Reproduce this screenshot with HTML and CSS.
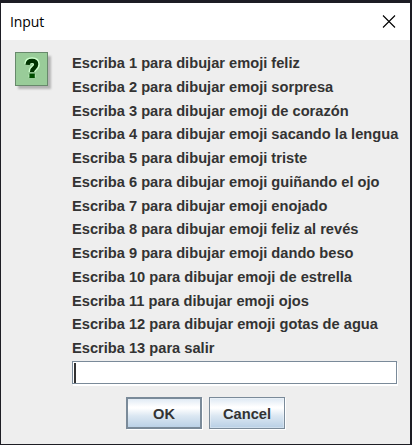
FILE: index.html
```html
<!DOCTYPE html>
<html lang="es">
<head>
<meta charset="utf-8">
<title>Input</title>
<link rel="stylesheet" href="styles.css">
</head>
<body>
<main class="dialog">
  <header class="titlebar">
    <h1 class="title">Input</h1>
    <svg class="close" width="14" height="14" viewBox="0 0 14 14"><path d="M1 .5L13 12.5M13 .5L1 12.5" stroke="#000" stroke-width="1.1" fill="none"/></svg>
  </header>
  <div class="content">
    <svg class="question" width="40" height="40" viewBox="0 0 40 40">
      <defs><filter id="soft" x="-20%" y="-20%" width="140%" height="140%"><feGaussianBlur stdDeviation="1.2"/></filter></defs>
      <rect x="3" y="4" width="33" height="33" fill="#b4b4b4" filter="url(#soft)"/>
      <rect x=".5" y=".5" width="32" height="33" fill="#99cc99" stroke="#67896b"/>
      <path d="M12.8 12.2V11.5Q13 8.6 17 8.6Q21.4 8.6 21.4 12.3Q21.4 14.6 19 16.2Q17 17.6 17 20M17 22.5V25.2" fill="none" stroke="#ccffcc" stroke-width="6.8" stroke-linejoin="round"/>
      <path d="M12.6 12.8Q12.8 8.9 17 8.9Q21.2 8.9 21.2 12.3Q21.2 14.6 19 16.2Q17 17.6 17 20" fill="none" stroke="#003300" stroke-width="4.2"/>
      <rect x="14.4" y="21.4" width="5.4" height="4.6" fill="#004d00"/>
      <path d="M14 20.8H20" stroke="#8dbd8d" stroke-width="1.2"/>
    </svg>
    <div class="form">
      <div class="message">
        <p>Escriba 1 para dibujar emoji feliz</p>
        <p>Escriba 2 para dibujar emoji sorpresa</p>
        <p>Escriba 3 para dibujar emoji de corazón</p>
        <p>Escriba 4 para dibujar emoji sacando la lengua</p>
        <p>Escriba 5 para dibujar emoji triste</p>
        <p>Escriba 6 para dibujar emoji guiñando el ojo</p>
        <p>Escriba 7 para dibujar emoji enojado</p>
        <p>Escriba 8 para dibujar emoji feliz al revés</p>
        <p>Escriba 9 para dibujar emoji dando beso</p>
        <p>Escriba 10 para dibujar emoji de estrella</p>
        <p>Escriba 11 para dibujar emoji ojos</p>
        <p>Escriba 12 para dibujar emoji gotas de agua</p>
        <p>Escriba 13 para salir</p>
      </div>
      <div class="field"><span class="caret"></span></div>
    </div>
  </div>
  <footer class="actions">
    <button class="button focused">OK</button>
    <button class="button">Cancel</button>
  </footer>
</main>
</body>
</html>
```
FILE: styles.css
```css
* { box-sizing: border-box; }
body {
  margin: 0;
  height: 445px;
  padding: 3px 2px 1px 1px;
  background: #1d1d24;
  overflow: hidden;
  font-family: "Liberation Sans", Arial, sans-serif;
  color: #333;
}
.dialog {
  height: 441px;
  background: #eee;
  display: flex;
  flex-direction: column;
}
.titlebar {
  height: 37px;
  background: #fff;
  display: flex;
  align-items: center;
  justify-content: space-between;
  padding: 0 14px 0 9px;
}
.title {
  margin: 0;
  font: 400 14px "Open Sans", "Noto Sans", sans-serif;
  letter-spacing: -0.1px;
  color: #000;
}
.content {
  display: flex;
  padding: 12px 12px 0 14px;
}
.question { flex: none; margin-right: 17px; }
.form { width: 325px; }
.message { height: 309px; }
.message p {
  margin: 0;
  height: 23.77px;
  line-height: 23px;
  font-size: 14.65px;
  font-weight: 700;
  white-space: nowrap;
}
.field {
  height: 23px;
  border: 1px solid #7a8a99;
  background: #fff;
  box-shadow: 1px 2px 0 #fff;
  padding: 1px;
}
.caret {
  display: block;
  width: 2px;
  height: 20px;
  background: #333;
}
.actions {
  display: flex;
  gap: 7px;
  margin: 13px 0 0 125px;
}
.button {
  width: 76px;
  height: 32px;
  padding: 2px 0 0;
  border: 1px solid #7a8a99;
  background: linear-gradient(#dde8f3, #fff 30%, #fff 34%, #dbe7f2 60%, #b8cfe5);
  box-shadow: inset 0 0 0 1px #ffffff50, 1px 1px 0 #fff;
  font: 700 14.65px "Liberation Sans", Arial, sans-serif;
  color: #333;
}
.focused { box-shadow: inset 0 0 0 1px #7a8a99, 1px 1px 0 #fff; }
```
